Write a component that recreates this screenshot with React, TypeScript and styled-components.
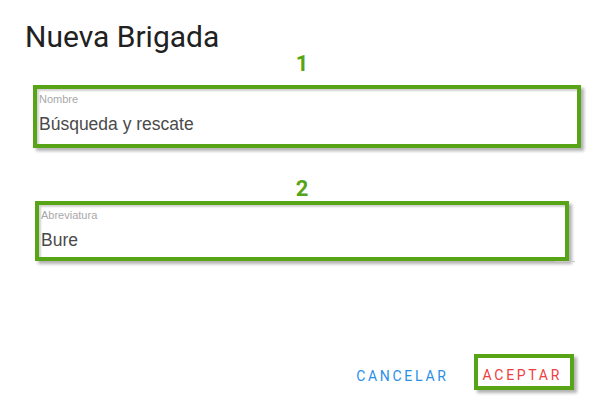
import React from "react";
import { styled, createGlobalStyle } from "styled-components";

const GlobalStyle = createGlobalStyle`
  html, body {
    margin: 0;
    padding: 0;
    background: #ffffff;
  }
`;

const Dialog = styled.div`
  width: 616px;
  height: 414px;
  box-sizing: border-box;
  padding-top: 22px;
  background: #ffffff;
  display: flex;
  flex-direction: column;
  font-family: "Liberation Sans", Arial, sans-serif;
`;

const Title = styled.h2`
  margin: 0;
  padding-left: 25px;
  font-family: Roboto, "Liberation Sans", sans-serif;
  font-size: 30px;
  font-weight: 400;
  line-height: 29px;
  color: #212121;
`;

const StepNumber = styled.div<{ $top: number; $bottom: number }>`
  margin-top: ${(p) => p.$top}px;
  margin-bottom: ${(p) => p.$bottom}px;
  padding-right: 12px;
  text-align: center;
  font-family: Roboto, "Liberation Sans", sans-serif;
  font-size: 22px;
  font-weight: 700;
  line-height: 22px;
  color: #57a517;
`;

const Highlight = styled.div<{ $left: number; $width: number; $height: number }>`
  position: relative;
  box-sizing: border-box;
  margin-left: ${(p) => p.$left}px;
  width: ${(p) => p.$width}px;
  height: ${(p) => p.$height}px;
  border: 4px solid #57a517;
  box-shadow: 3px 3px 3px rgba(0, 0, 0, 0.3), inset 2px 2px 2px rgba(0, 0, 0, 0.18);
  padding: 4px 0 0 2px;
  display: flex;
  flex-direction: column;
  gap: 7px;
`;

const Underline = styled.div`
  position: absolute;
  right: -10px;
  bottom: -5px;
  width: 20px;
  height: 1px;
  background: #c8c8c8;
`;

const FieldLabel = styled.label`
  font-size: 11px;
  line-height: 13px;
  color: #a8a8a8;
`;

const FieldValue = styled.div`
  font-size: 17.5px;
  line-height: 22px;
  color: #4a4a4a;
`;

const Actions = styled.div`
  margin-top: auto;
  margin-bottom: 24px;
  margin-right: 42px;
  display: flex;
  justify-content: flex-end;
  align-items: flex-end;
  gap: 25px;
`;

const TextButton = styled.button<{ $color: string; $marked?: boolean }>`
  box-sizing: border-box;
  background: none;
  border: ${(p) => (p.$marked ? "4px solid #57a517" : "none")};
  box-shadow: ${(p) => (p.$marked ? "3px 3px 3px rgba(0, 0, 0, 0.3)" : "none")};
  padding: ${(p) => (p.$marked ? "9px 8px 3px 5px" : "0 0 6px 0")};
  font-family: Roboto, "Liberation Sans", sans-serif;
  font-size: 14px;
  line-height: 16px;
  letter-spacing: 2.7px;
  text-transform: uppercase;
  color: ${(p) => p.$color};
  cursor: pointer;
`;

const App: React.FC = () => {
  return (
    <>
      <GlobalStyle />
      <Dialog>
        <Title>Nueva Brigada</Title>

        <StepNumber $top={2} $bottom={10}>1</StepNumber>
        <Highlight $left={33} $width={548} $height={63}>
          <FieldLabel>Nombre</FieldLabel>
          <FieldValue>Búsqueda y rescate</FieldValue>
        </Highlight>

        <StepNumber $top={30} $bottom={1}>2</StepNumber>
        <Highlight $left={35} $width={534} $height={60}>
          <FieldLabel>Abreviatura</FieldLabel>
          <FieldValue>Bure</FieldValue>
          <Underline />
        </Highlight>

        <Actions>
          <TextButton $color="#2b8fe8">Cancelar</TextButton>
          <TextButton $color="#ee4040" $marked>
            Aceptar
          </TextButton>
        </Actions>
      </Dialog>
    </>
  );
};

export default App;
